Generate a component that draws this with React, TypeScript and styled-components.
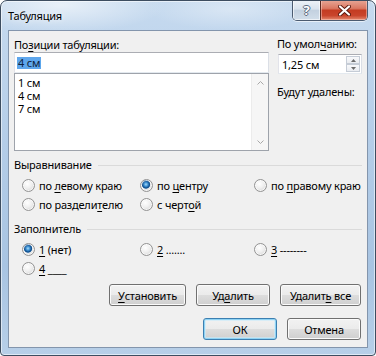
import React from "react";
import styled, { createGlobalStyle, css } from "styled-components";

const FONT = `"Noto Sans", "Open Sans", sans-serif`;

const GlobalStyle = createGlobalStyle`
  html, body { margin: 0; padding: 0; background: #ffffff; }
  body { font-family: ${FONT}; }
`;

const Window = styled.div`
  box-sizing: border-box;
  width: 376px;
  height: 356px;
  border: 1px solid #3d4d60;
  border-radius: 7px 7px 4px 4px;
  background:
    radial-gradient(ellipse 150px 40px at 60px 4px, rgba(255,255,255,0.6), rgba(255,255,255,0) 70%),
    radial-gradient(ellipse 120px 30px at 230px 8px, rgba(255,255,255,0.35), rgba(255,255,255,0) 70%),
    linear-gradient(180deg, #c6daef 0%, #b4cde8 40%, #a8c4e2 75%, #b7cfe8 100%);
  box-shadow: inset 0 0 0 1px rgba(255, 255, 255, 0.55);
  padding: 0 7px 7px 7px;
  display: flex;
  flex-direction: column;
  font-family: ${FONT};
  font-size: 11px;
  letter-spacing: -0.2px;
  color: #000;
  overflow: hidden;
`;

const TitleBar = styled.div`
  height: 29px;
  display: flex;
  justify-content: space-between;
  align-items: flex-start;
`;

const Title = styled.div`
  margin-top: 7px;
  line-height: 15px;
  font-size: 11px;
  color: #000;
  text-shadow: 0 0 6px rgba(255, 255, 255, 0.9);
`;

const CaptionGroup = styled.div`
  margin-top: -1px;
  height: 20px;
  display: flex;
  border: 1px solid #4b5b70;
  border-top: none;
  border-radius: 0 0 5px 5px;
  overflow: hidden;
  box-shadow: 0 1px 0 rgba(255, 255, 255, 0.6);
`;

const HelpButton = styled.div`
  width: 27px;
  display: flex;
  align-items: center;
  justify-content: center;
  background: linear-gradient(180deg, #eef3f8 0%, #d9e3ee 45%, #c3d1e0 52%, #d2deea 100%);
  box-shadow: inset 0 0 0 1px rgba(255, 255, 255, 0.6);
  font-weight: bold;
  font-size: 13px;
  color: #ffffff;
  text-shadow: 1px 0 0 #5b6b80, -1px 0 0 #5b6b80, 0 1px 0 #5b6b80, 0 -1px 0 #5b6b80;
`;

const CloseButton = styled.div`
  width: 46px;
  border-left: 1px solid #5b2a22;
  display: flex;
  align-items: center;
  justify-content: center;
  background: linear-gradient(180deg, #e8a898 0%, #da7862 42%, #c43c22 52%, #c9452c 78%, #e58a70 100%);
  box-shadow: inset 0 0 0 1px rgba(255, 220, 210, 0.45);
`;

const Client = styled.div`
  flex: 1;
  border: 1px solid #8395ac;
  background: #f0f0f0;
  padding: 7px 5px 0 5px;
  display: flex;
  flex-direction: column;
`;

const TopGrid = styled.div`
  display: grid;
  grid-template-columns: 255px 85px;
  column-gap: 8px;
`;

const Column = styled.div`
  display: flex;
  flex-direction: column;
`;

const FieldLabel = styled.div<{ $mt?: number }>`
  line-height: 14px;
  height: 14px;
  margin-top: ${(p) => p.$mt ?? 0}px;
  white-space: nowrap;
`;

const Acc = styled.span`
  text-decoration: underline;
  text-underline-offset: 2px;
`;

const fieldBorder = css`
  box-sizing: border-box;
  border: 1px solid;
  border-color: #abadb3 #dbdfe6 #e3e9ef #e2e3ea;
  background: #ffffff;
`;

const TextInput = styled.div`
  ${fieldBorder};
  height: 21px;
  padding: 0 2px;
  display: flex;
  align-items: center;
`;

const Selected = styled.span`
  background: #5ea6ec;
  color: #0d2240;
  line-height: 12px;
  padding: 0 1px;
`;

const ListBox = styled.div`
  box-sizing: border-box;
  height: 78px;
  border: 1px solid #9ea3ab;
  background: #ffffff;
  display: flex;
`;

const ListItems = styled.div`
  flex: 1;
  padding: 2px 3px;
  display: flex;
  flex-direction: column;
`;

const ListItem = styled.div`
  line-height: 13px;
  height: 13px;
`;

const ScrollBar = styled.div`
  width: 16px;
  background: #f6f6f6;
  border-left: 1px solid #ececec;
  display: flex;
  flex-direction: column;
  justify-content: space-between;
  align-items: center;
  padding: 7px 0 6px 0;
`;

const Spinner = styled.div`
  ${fieldBorder};
  margin-left: 1px;
  margin-top: 3px;
  height: 20px;
  display: flex;
  align-items: stretch;
`;

const SpinText = styled.div`
  flex: 1;
  padding-left: 3px;
  display: flex;
  align-items: center;
`;

const SpinButtons = styled.div`
  width: 14px;
  margin: 1px 1px 1px 0;
  display: flex;
  flex-direction: column;
`;

const SpinButton = styled.div`
  flex: 1;
  box-sizing: border-box;
  border: 1px solid #c5ccd6;
  background: linear-gradient(180deg, #f8f9fb 0%, #e9ecf0 100%);
  display: flex;
  align-items: center;
  justify-content: center;
`;

const GroupHeader = styled.div<{ $mt: number }>`
  margin-top: ${(p) => p.$mt}px;
  height: 14px;
  line-height: 14px;
  display: flex;
  align-items: center;
  gap: 6px;
  white-space: nowrap;
`;

const GroupLine = styled.div`
  flex: 1;
  height: 0;
  border-top: 1px solid #dadada;
  margin-top: 1px;
`;

const RadioGrid = styled.div`
  display: grid;
  grid-template-columns: 118px 114px 1fr;
  grid-auto-rows: 19px;
  padding-left: 8px;
  margin-top: 4px;
`;

const RadioItem = styled.label`
  display: flex;
  align-items: center;
  gap: 4px;
  white-space: nowrap;
`;

const RadioCircle = styled.span<{ $checked?: boolean }>`
  box-sizing: border-box;
  width: 13px;
  height: 13px;
  border-radius: 50%;
  flex: none;
  border: 1px solid #939393;
  background: ${(p) =>
    p.$checked
      ? "radial-gradient(circle at 45% 40%, #a9dcf8 0px, #3c8fd2 2px, #124f8c 3.5px, #2d6aa3 4px, rgba(0,0,0,0) 4.6px), radial-gradient(circle at 40% 35%, #ffffff 0%, #eeeeee 45%, #c9c9c9 100%)"
      : "radial-gradient(circle at 40% 35%, #ffffff 0%, #efefef 45%, #cbcbcb 100%)"};
  box-shadow: inset 0 0 0 1px rgba(255, 255, 255, 0.7);
`;

const ButtonRow = styled.div<{ $mt: number }>`
  margin-top: ${(p) => p.$mt}px;
  display: flex;
  justify-content: flex-end;
  gap: 10px;
  padding-right: 1px;
`;

const Button = styled.div<{ $w: number; $default?: boolean }>`
  box-sizing: border-box;
  width: ${(p) => p.$w}px;
  height: 22px;
  border: 1px solid ${(p) => (p.$default ? "#3c7fb1" : "#707070")};
  border-radius: 3px;
  background: linear-gradient(180deg, #f2f2f2 0%, #ebebeb 50%, #dddddd 51%, #cfcfcf 100%);
  box-shadow: ${(p) =>
    p.$default
      ? "inset 0 0 0 1px #8fd3f4, inset 0 0 0 2px rgba(200, 235, 252, 0.6)"
      : "inset 0 0 0 1px #fbfbfb"};
  display: flex;
  align-items: center;
  justify-content: center;
  white-space: pre;
`;

const Chevron = ({ up, color }: { up?: boolean; color: string }) => (
  <svg width="7" height="4" viewBox="0 0 7 4">
    <polyline
      points={up ? "0.5,3.5 3.5,0.5 6.5,3.5" : "0.5,0.5 3.5,3.5 6.5,0.5"}
      fill="none"
      stroke={color}
      strokeWidth="1"
    />
  </svg>
);

const Tri = ({ up }: { up?: boolean }) => (
  <svg width="5" height="3" viewBox="0 0 5 3">
    <polygon points={up ? "0,3 2.5,0 5,3" : "0,0 2.5,3 5,0"} fill="#6b6b6b" />
  </svg>
);

const Radio = ({ checked, children }: { checked?: boolean; children: React.ReactNode }) => (
  <RadioItem>
    <RadioCircle $checked={checked} />
    <span>{children}</span>
  </RadioItem>
);

export default function App() {
  return (
    <>
      <GlobalStyle />
      <Window>
        <TitleBar>
          <Title>Табуляция</Title>
          <CaptionGroup>
            <HelpButton>?</HelpButton>
            <CloseButton>
              <svg width="13" height="11" viewBox="0 0 13 11">
                <path d="M2 1.5 L11 9.5 M11 1.5 L2 9.5" stroke="#5a1a10" strokeWidth="4" strokeLinecap="round" />
                <path d="M2 1.5 L11 9.5 M11 1.5 L2 9.5" stroke="#ffffff" strokeWidth="2.2" strokeLinecap="round" />
              </svg>
            </CloseButton>
          </CaptionGroup>
        </TitleBar>
        <Client>
          <TopGrid>
            <Column>
              <FieldLabel>
                По<Acc>з</Acc>иции табуляции:
              </FieldLabel>
              <TextInput>
                <Selected>4 см</Selected>
              </TextInput>
              <ListBox>
                <ListItems>
                  <ListItem>1 см</ListItem>
                  <ListItem>4 см</ListItem>
                  <ListItem>7 см</ListItem>
                </ListItems>
                <ScrollBar>
                  <Chevron up color="#a8a8a8" />
                  <Chevron color="#a8a8a8" />
                </ScrollBar>
              </ListBox>
            </Column>
            <Column>
              <FieldLabel $mt={-1}>
                По умол<Acc>ч</Acc>анию:
              </FieldLabel>
              <Spinner>
                <SpinText>1,25 см</SpinText>
                <SpinButtons>
                  <SpinButton>
                    <Tri up />
                  </SpinButton>
                  <SpinButton>
                    <Tri />
                  </SpinButton>
                </SpinButtons>
              </Spinner>
              <FieldLabel $mt={11}>Будут удалены:</FieldLabel>
            </Column>
          </TopGrid>

          <GroupHeader $mt={7}>
            Выравнивание
            <GroupLine />
          </GroupHeader>
          <RadioGrid>
            <Radio>
              по <Acc>л</Acc>евому краю
            </Radio>
            <Radio checked>
              по <Acc>ц</Acc>ентру
            </Radio>
            <Radio>
              по <Acc>п</Acc>равому краю
            </Radio>
            <Radio>
              по раздели<Acc>т</Acc>елю
            </Radio>
            <Radio>
              с черт<Acc>о</Acc>й
            </Radio>
          </RadioGrid>

          <GroupHeader $mt={8}>
            Заполнитель
            <GroupLine />
          </GroupHeader>
          <RadioGrid>
            <Radio checked>
              <Acc>1</Acc> (нет)
            </Radio>
            <Radio>
              <Acc>2</Acc> .......
            </Radio>
            <Radio>
              <Acc>3</Acc> --------
            </Radio>
            <Radio>
              <Acc>4</Acc> ____
            </Radio>
          </RadioGrid>

          <ButtonRow $mt={6}>
            <Button $w={77}>
              <Acc>У</Acc>становить
            </Button>
            <Button $w={74}>
              Уд<Acc>а</Acc>лить
            </Button>
            <Button $w={81}>
              Удалит<Acc>ь</Acc>{" все"}
            </Button>
          </ButtonRow>
          <ButtonRow $mt={12}>
            <Button $w={74} $default>
              ОК
            </Button>
            <Button $w={74}>Отмена</Button>
          </ButtonRow>
        </Client>
      </Window>
    </>
  );
}
